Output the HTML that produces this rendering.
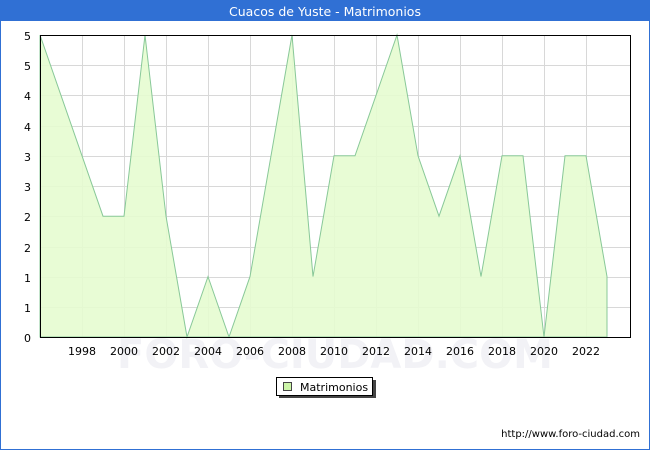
<!DOCTYPE html>
<html><head><meta charset="utf-8"><style>
body{margin:0;width:650px;height:450px;overflow:hidden;font-family:"DejaVu Sans","Liberation Sans",sans-serif;}
</style></head><body>
<svg width="650" height="450" xmlns="http://www.w3.org/2000/svg" font-family="DejaVu Sans, Liberation Sans, sans-serif">
<rect x="0" y="0" width="650" height="450" fill="#fff"/>
<rect x="0.5" y="0.5" width="649" height="449" fill="none" stroke="#3070d4"/>
<rect x="0" y="0" width="650" height="21" fill="#3070d4"/>
<text x="325" y="16" font-size="12.5" fill="#fff" text-anchor="middle">Cuacos de Yuste - Matrimonios</text>
<text x="335" y="368" font-size="40" fill="#f2f2f6" text-anchor="middle" font-weight="bold">FORO-CIUDAD.COM</text>
<g stroke="#d8d8d8" stroke-width="1">
<line x1="40" y1="65.5" x2="630" y2="65.5"/><line x1="40" y1="95.5" x2="630" y2="95.5"/><line x1="40" y1="126.5" x2="630" y2="126.5"/><line x1="40" y1="156.5" x2="630" y2="156.5"/><line x1="40" y1="186.5" x2="630" y2="186.5"/><line x1="40" y1="216.5" x2="630" y2="216.5"/><line x1="40" y1="247.5" x2="630" y2="247.5"/><line x1="40" y1="277.5" x2="630" y2="277.5"/><line x1="40" y1="307.5" x2="630" y2="307.5"/>
<line x1="82.5" y1="35" x2="82.5" y2="337"/><line x1="124.5" y1="35" x2="124.5" y2="337"/><line x1="166.5" y1="35" x2="166.5" y2="337"/><line x1="208.5" y1="35" x2="208.5" y2="337"/><line x1="250.5" y1="35" x2="250.5" y2="337"/><line x1="292.5" y1="35" x2="292.5" y2="337"/><line x1="334.5" y1="35" x2="334.5" y2="337"/><line x1="376.5" y1="35" x2="376.5" y2="337"/><line x1="418.5" y1="35" x2="418.5" y2="337"/><line x1="460.5" y1="35" x2="460.5" y2="337"/><line x1="502.5" y1="35" x2="502.5" y2="337"/><line x1="544.5" y1="35" x2="544.5" y2="337"/><line x1="586.5" y1="35" x2="586.5" y2="337"/>
</g>
<polygon fill="#e6fcd0" fill-opacity="0.9" stroke="#88c898" stroke-width="1" points="40,337 40,35 61,95.4 82,155.8 103,216.2 124,216.2 145,35 166,216.2 187,337 208,276.6 229,337 250,276.6 271,155.8 292,35 313,276.6 334,155.8 355,155.8 376,95.4 397,35 418,155.8 439,216.2 460,155.8 481,276.6 502,155.8 523,155.8 544,337 565,155.8 586,155.8 607,276.6 607,337"/>
<rect x="40.5" y="35.5" width="590" height="302" fill="none" stroke="#000"/>
<g font-size="11" fill="#000" text-anchor="end">
<text x="31" y="40">5</text><text x="31" y="70">5</text><text x="31" y="100">4</text><text x="31" y="131">4</text><text x="31" y="161">3</text><text x="31" y="191">3</text><text x="31" y="221">2</text><text x="31" y="252">2</text><text x="31" y="282">1</text><text x="31" y="312">1</text><text x="31" y="342">0</text>
</g>
<g font-size="11" fill="#000" text-anchor="middle">
<text x="82" y="355">1998</text><text x="124" y="355">2000</text><text x="166" y="355">2002</text><text x="208" y="355">2004</text><text x="250" y="355">2006</text><text x="292" y="355">2008</text><text x="334" y="355">2010</text><text x="376" y="355">2012</text><text x="418" y="355">2014</text><text x="460" y="355">2016</text><text x="502" y="355">2018</text><text x="544" y="355">2020</text><text x="586" y="355">2022</text>
</g>
<rect x="279" y="380" width="97" height="18" fill="#444"/>
<rect x="276.5" y="377.5" width="96" height="18" fill="#fff" stroke="#000"/>
<rect x="283.5" y="382.5" width="8" height="8" fill="#ccf5a8" stroke="#444"/>
<text x="300" y="391" font-size="11" fill="#000">Matrimonios</text>
<text x="640" y="437" font-size="10" fill="#000" text-anchor="end">http://www.foro-ciudad.com</text>
</svg>
</body></html>
